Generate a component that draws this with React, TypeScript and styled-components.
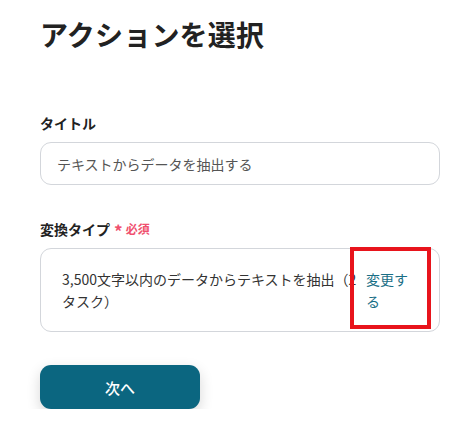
import React from "react";
import styled, { createGlobalStyle } from "styled-components";

const Global = createGlobalStyle`
  html, body { margin: 0; padding: 0; background: #fff; }
  body { font-family: "Noto Sans CJK JP", "Noto Sans", sans-serif; color: #222; }
`;

const Page = styled.div`
  padding: 13px 19px 0 40px;
  display: flex;
  flex-direction: column;
`;

const Title = styled.h1`
  margin: 0;
  font-size: 28px;
  line-height: 42px;
  font-weight: 700;
  color: #222;
  letter-spacing: 0.2px;
`;

const Field = styled.div<{ $top: number }>`
  margin-top: ${(p) => p.$top}px;
  display: flex;
  flex-direction: column;
  gap: 9px;
`;

const Label = styled.div`
  display: flex;
  align-items: center;
  font-size: 14px;
  line-height: 20px;
  font-weight: 700;
  color: #222;
`;

const Required = styled.span`
  margin-left: 4px;
  color: #f0506e;
  font-size: 12px;
  font-weight: 700;
  display: flex;
  align-items: center;
  gap: 3px;
`;

const Star = styled.span`
  font-size: 17px;
  line-height: 1;
  margin-top: 4px;
`;

const Input = styled.div`
  height: 43px;
  box-sizing: border-box;
  border: 1px solid #d3d6db;
  border-radius: 11px;
  padding: 0 16px;
  display: flex;
  align-items: center;
  font-size: 14px;
  color: #555;
`;

const SelectBox = styled.div`
  position: relative;
  height: 84px;
  box-sizing: border-box;
  border: 1px solid #d3d6db;
  border-radius: 11px;
  padding: 0 21px 0 21px;
  display: flex;
  align-items: center;
  gap: 3px;
`;

const SelectText = styled.div`
  flex: 1;
  min-width: 0;
  font-size: 14px;
  line-height: 22px;
  color: #333;
  overflow: hidden;
`;

const ChangeLink = styled.a`
  width: 52px;
  flex: none;
  font-size: 14px;
  line-height: 22px;
  color: #1a6f86;
  text-decoration: none;
  cursor: pointer;
`;

const Highlight = styled.div`
  position: absolute;
  left: 309px;
  top: -2px;
  width: 81px;
  height: 82px;
  box-sizing: border-box;
  border: 4px solid #e8141c;
  pointer-events: none;
`;

const NextButton = styled.button`
  margin-top: 33px;
  width: 160px;
  height: 44px;
  border: none;
  border-radius: 11px;
  background: #0b6680;
  color: #fff;
  font-family: inherit;
  font-size: 15px;
  font-weight: 500;
  box-shadow: 0 5px 14px rgba(0, 0, 0, 0.16);
  cursor: pointer;
`;

export default function App() {
  return (
    <>
      <Global />
      <Page>
        <Title>アクションを選択</Title>
        <Field $top={58}>
          <Label>タイトル</Label>
          <Input>テキストからデータを抽出する</Input>
        </Field>
        <Field $top={33}>
          <Label>
            変換タイプ
            <Required>
              <Star>*</Star>必須
            </Required>
          </Label>
          <SelectBox>
            <SelectText>3,500文字以内のデータからテキストを抽出（2タスク）</SelectText>
            <ChangeLink>変更する</ChangeLink>
            <Highlight />
          </SelectBox>
        </Field>
        <NextButton>次へ</NextButton>
      </Page>
    </>
  );
}
